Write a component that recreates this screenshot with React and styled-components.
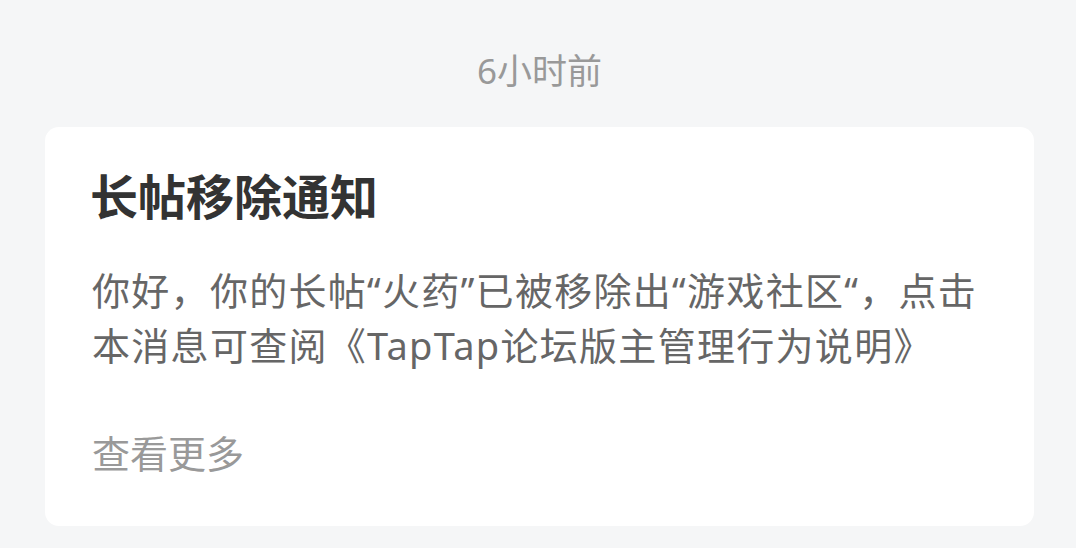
import React from "react";
import styled, { createGlobalStyle } from "styled-components";

const GlobalStyle = createGlobalStyle`
  html, body {
    margin: 0;
    padding: 0;
    background: #f5f6f7;
    font-family: "Noto Sans", "Noto Sans CJK SC", sans-serif;
  }
`;

const Page = styled.div`
  padding: 50px 42px 20px 45px;
  display: flex;
  flex-direction: column;
  align-items: stretch;
`;

const TimeStamp = styled.div`
  text-align: center;
  font-size: 35px;
  line-height: 41px;
  color: #999999;
  margin-bottom: 36px;
`;

const Card = styled.div`
  background: #ffffff;
  border-radius: 14px;
  padding: 41px 47px 45px 45px;
  display: flex;
  flex-direction: column;
`;

const Title = styled.h2`
  margin: 0 0 37px;
  font-size: 48px;
  line-height: 58px;
  font-weight: 600;
  color: #333333;
`;

const Body = styled.p`
  margin: 0 0 53px 2px;
  font-size: 38px;
  line-height: 55px;
  letter-spacing: 1.3px;
  color: #666666;
`;

const MoreLink = styled.span`
  margin-left: 2px;
  font-size: 38px;
  line-height: 55px;
  color: #999999;
`;

export default function App() {
  return (
    <>
      <GlobalStyle />
      <Page>
        <TimeStamp>6小时前</TimeStamp>
        <Card>
          <Title>长帖移除通知</Title>
          <Body>
            你好，你的长帖“火药”已被移除出“游戏社区“，点击本消息可查阅《TapTap论坛版主管理行为说明》
          </Body>
          <MoreLink>查看更多</MoreLink>
        </Card>
      </Page>
    </>
  );
}
